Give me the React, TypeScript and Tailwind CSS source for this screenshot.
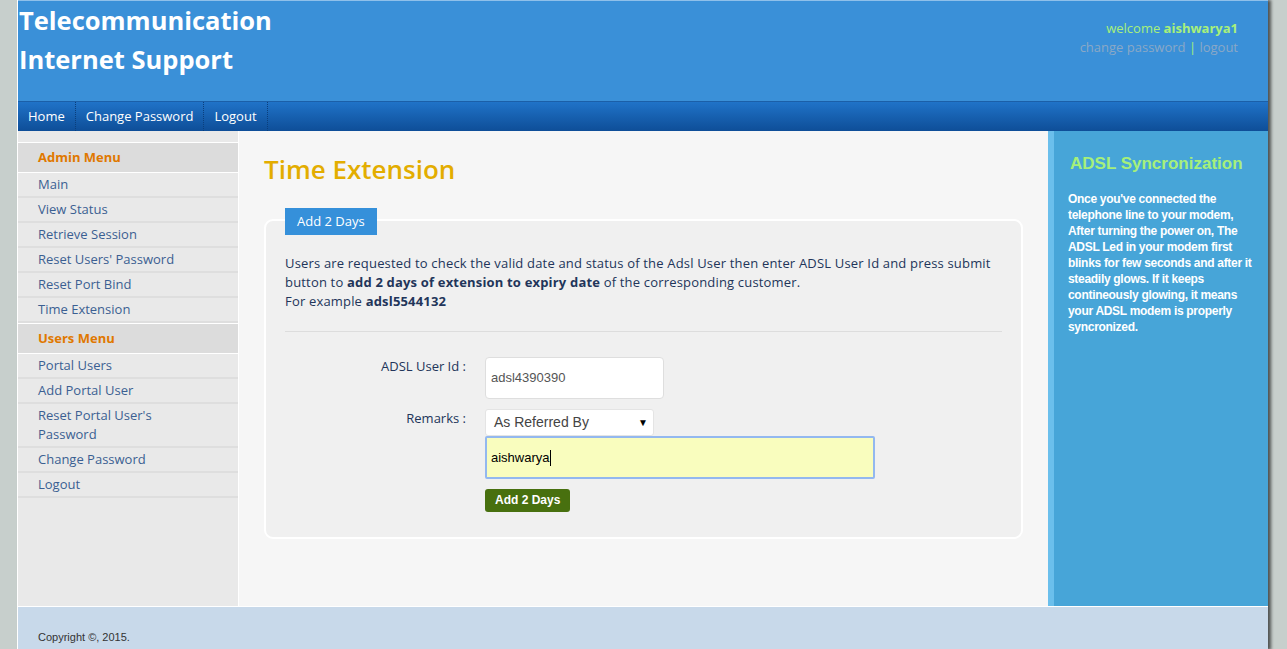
import React from 'react';

const adminMenu = ['Main', 'View Status', 'Retrieve Session', "Reset Users' Password", 'Reset Port Bind', 'Time Extension'];
const usersMenu = ['Portal Users', 'Add Portal User', "Reset Portal User's Password", 'Change Password', 'Logout'];

function MenuBlock({ title, items }: { title: string; items: string[] }) {
  return (
    <div>
      <div className="h-[31px] border-t border-white bg-[#dcdcdc] border-b border-[#d4d4d4] pl-[20px] flex items-center text-[13px] font-bold text-[#e07800]">
        {title}
      </div>
      {items.map((item) => (
        <div
          key={item}
          className="border-b-2 border-[#dedede] pl-[20px] pr-[60px] py-[2px] text-[13px] leading-[19px] text-[#3b5f92]"
        >
          {item}
        </div>
      ))}
    </div>
  );
}

export default function App() {
  return (
    <div className="min-h-[649px] bg-[#c7cfcc] font-['Open_Sans',sans-serif]">
      <div className="ml-[17px] w-[1251px] border-l border-white shadow-[3px_0_3px_rgba(0,0,0,0.6)] bg-[#f6f6f6]">
        {/* header */}
        <div className="h-[101px] bg-[#3a90d8] border-t border-[#8fc0ea] flex justify-between">
          <div className="pl-[1px] text-white font-bold text-[25.5px] leading-[39px]">
            <div>Telecommunication</div>
            <div>Internet Support</div>
          </div>
          <div className="pr-[30px] pt-[18px] text-right text-[13px] leading-[19px]">
            <div className="text-[#a8f07a]">
              welcome <span className="font-bold">aishwarya1</span>
            </div>
            <div className="text-[#8aa8c6]">
              change password <span className="text-[#a8f07a]">|</span> logout
            </div>
          </div>
        </div>

        {/* nav */}
        <div className="h-[30px] border-t border-[#1b5fa8] bg-gradient-to-b from-[#2073c8] to-[#0e4e98] flex text-white text-[13px]">
          {['Home', 'Change Password', 'Logout'].map((n) => (
            <div key={n} className="px-[10px] flex items-center border-r border-dotted border-[#0b3f7c]">
              {n}
            </div>
          ))}
        </div>

        {/* body */}
        <div className="flex h-[475px]">
          <div className="w-[221px] bg-[#e9e9e9] pt-[11px] border-r border-white">
            <MenuBlock title="Admin Menu" items={adminMenu} />
            <MenuBlock title="Users Menu" items={usersMenu} />
          </div>

          <div className="flex-1 pl-[25px] pr-[25px]">
            <h1 className="text-[26px] font-semibold text-[#e3ad00] pt-[20px] leading-[36px]">Time Extension</h1>
            <div className="mt-[32px] bg-[#f0f0f0] border-2 border-white rounded-[9px] px-[19px] pb-[25px]">
              <div className="-mt-[13px] w-fit bg-[#3590da] text-white text-[13px] px-[12px] h-[27px] leading-[27px]">
                Add 2 Days
              </div>
              <p className="mt-[19px] text-[13px] leading-[19px] tracking-[0.18px] text-[#22355a]">
                Users are requested to check the valid date and status of the Adsl User then enter ADSL User Id and press submit
                button to <b>add 2 days of extension to expiry date</b> of the corresponding customer.
                <br />
                For example <b>adsl5544132</b>
              </p>
              <div className="mt-[20px] border-t border-[#dddddd]" />
              <div className="mt-[25px] flex">
                <div className="w-[181px] text-right text-[13px] text-[#22355a]">
                  <div className="pt-[1px] leading-[16px]">ADSL User Id :</div>
                  <div className="mt-[36px] leading-[16px]">Remarks :</div>
                </div>
                <div className="ml-[19px] flex flex-col items-start font-['Liberation_Sans',sans-serif]">
                  <div className="w-[179px] h-[42px] bg-white border border-[#dedede] rounded-[4px] flex items-center pl-[5px] text-[13px] text-[#555]">
                    adsl4390390
                  </div>
                  <div className="mt-[10px] w-[169px] h-[27px] bg-white rounded-[3px] border border-[#e4e4e4] flex items-center justify-between pl-[8px] pr-[5px] text-[14px] text-[#444]">
                    <span>As Referred By</span>
                    <span className="text-[10px] text-black">▼</span>
                  </div>
                  <div className="w-[390px] h-[43px] bg-[#f9fdbe] border-2 border-[#93b8ef] rounded-[2px] flex items-center pl-[4px] text-[13px] text-black">
                    aishwarya<span className="inline-block w-px h-[16px] bg-black" />
                  </div>
                  <div className="mt-[10px] bg-[#48700f] rounded-[3px] text-white font-bold text-[12px] px-[10px] h-[23px] leading-[23px]">
                    Add 2 Days
                  </div>
                </div>
              </div>
            </div>
          </div>

          <div className="w-[220px] flex bg-[#47a5d8]">
            <div className="w-[6px] bg-[#6bbfec]" />
            <div className="flex-1 pl-[14px] pr-[10px] font-['Liberation_Sans',sans-serif]">
              <div className="pt-[22px] pl-[2px] text-[17px] font-bold text-[#a6f07a] leading-[22px]">ADSL Syncronization</div>
              <p className="mt-[16px] text-[12px] font-bold tracking-[-0.3px] text-white leading-[16px]">
                Once you've connected the telephone line to your modem, After turning the power on, The ADSL Led in your modem
                first blinks for few seconds and after it steadily glows. If it keeps contineously glowing, it means your ADSL
                modem is properly syncronized.
              </p>
            </div>
          </div>
        </div>

        {/* footer */}
        <div className="h-[44px] border-t border-white bg-[#c8d9ea] pl-[20px] pt-[22px] text-[11px] text-[#333] font-['Liberation_Sans',sans-serif]">
          Copyright ©, 2015.
        </div>
      </div>
    </div>
  );
}
